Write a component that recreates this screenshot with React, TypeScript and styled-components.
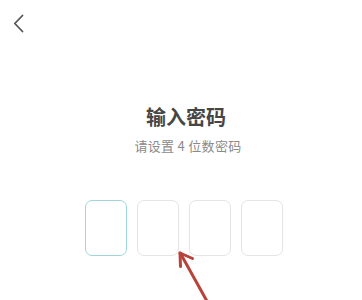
import styled, { createGlobalStyle } from "styled-components";

const GlobalStyle = createGlobalStyle`
  html, body {
    margin: 0;
    padding: 0;
    background: #ffffff;
  }
  body {
    font-family: "Noto Sans CJK SC", "Noto Sans", sans-serif;
  }
`;

const Page = styled.div`
  position: relative;
  width: 362px;
  height: 300px;
  overflow: hidden;
  background: #ffffff;
`;

const Header = styled.div`
  height: 48px;
  display: flex;
  align-items: flex-start;
  padding: 14px 0 0 13px;
  box-sizing: border-box;
`;

const BackButton = styled.button`
  border: none;
  background: none;
  padding: 0;
  width: 12px;
  height: 20px;
  cursor: pointer;
  display: flex;
`;

const Content = styled.div`
  display: flex;
  flex-direction: column;
  align-items: center;
  padding-left: 10px;
`;

const Title = styled.h1`
  margin: 55px 0 0;
  font-size: 20px;
  line-height: 28px;
  font-weight: 700;
  color: #464646;
`;

const Subtitle = styled.p`
  margin: 6px 0 0 4px;
  font-size: 13px;
  line-height: 18px;
  color: #8a8a8a;
  letter-spacing: 0.3px;
`;

const Boxes = styled.div`
  display: flex;
  gap: 10px;
  margin-top: 45px;
  margin-right: 4px;
`;

const Box = styled.div<{ $active?: boolean }>`
  width: 42px;
  height: 56px;
  box-sizing: border-box;
  border-radius: 7px;
  border: 1px solid ${(p) => (p.$active ? "#9ed6da" : "#e4e4e4")};
`;

const Annotation = styled.svg`
  position: absolute;
  left: 170px;
  top: 245px;
  pointer-events: none;
`;

export default function App() {
  return (
    <Page>
      <GlobalStyle />
      <Header>
        <BackButton aria-label="back">
          <svg width="12" height="20" viewBox="0 0 12 20">
            <path
              d="M9.5 1.5 L1.8 9.5 L9.5 17.5"
              fill="none"
              stroke="#555555"
              strokeWidth="1.8"
              strokeLinecap="round"
              strokeLinejoin="round"
            />
          </svg>
        </BackButton>
      </Header>
      <Content>
        <Title>输入密码</Title>
        <Subtitle>请设置 4 位数密码</Subtitle>
        <Boxes>
          {[0, 1, 2, 3].map((i) => (
            <Box key={i} $active={i === 0} />
          ))}
        </Boxes>
      </Content>
      <Annotation width="50" height="55" viewBox="0 0 50 55">
        <g stroke="#b8433a" strokeWidth="3" strokeLinecap="round" fill="none">
          <path d="M10.5 8.5 L38 58" />
          <path d="M10 8 L22.5 13.5" />
          <path d="M10 8 L10.5 21.5" />
        </g>
      </Annotation>
    </Page>
  );
}
